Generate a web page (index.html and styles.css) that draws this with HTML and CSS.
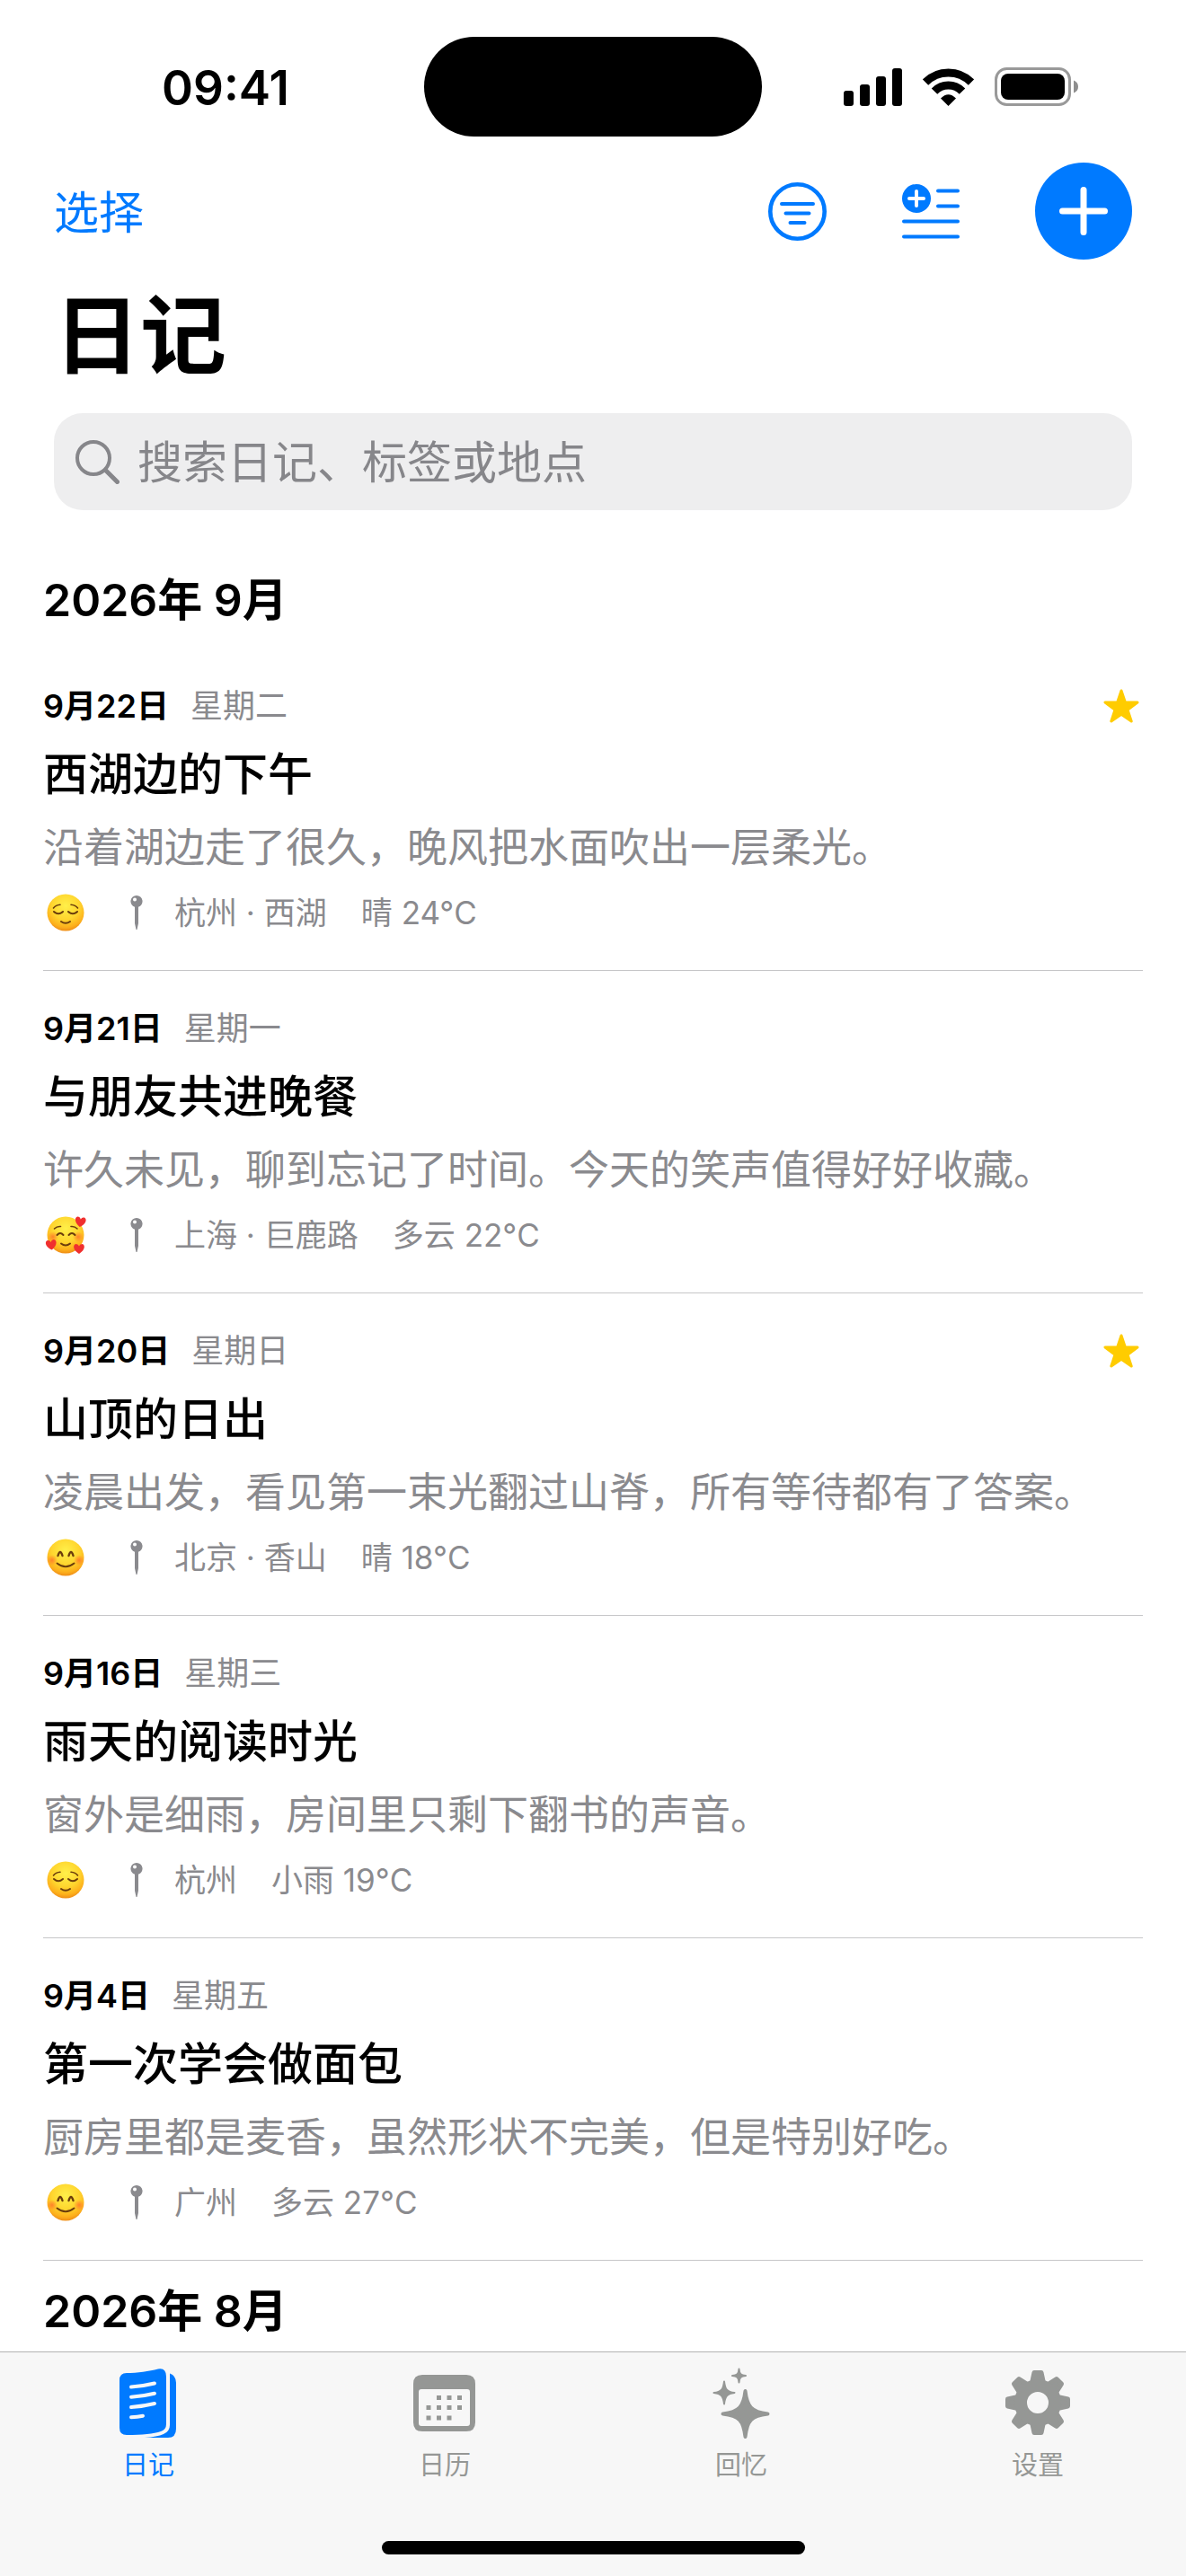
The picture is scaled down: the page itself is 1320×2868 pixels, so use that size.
FILE: index.html
```
<!DOCTYPE html>
<html lang="zh-CN">

<head>
    <meta charset="UTF-8">
    <meta name="viewport" content="width=device-width, initial-scale=1.0">
    <title>日记</title>
    <link rel="stylesheet" href="styles.css">
</head>

<body>
    <!-- Shared icons -->
    <svg class="sprite" aria-hidden="true">
        <defs>
            <radialGradient id="face" cx="50%" cy="32%" r="68%">
                <stop offset="0" stop-color="#fff04a" />
                <stop offset="0.55" stop-color="#ffd52e" />
                <stop offset="0.85" stop-color="#fdb01c" />
                <stop offset="1" stop-color="#ee8d17" />
            </radialGradient>
            <radialGradient id="blush">
                <stop offset="0" stop-color="#ff6a2a" stop-opacity="0.75" />
                <stop offset="1" stop-color="#ff6a2a" stop-opacity="0" />
            </radialGradient>
        </defs>
        <symbol id="relieved" viewBox="0 0 46 46">
            <circle cx="23" cy="23" r="20.500" fill="url(#face)" />
            <g fill="none" stroke="#6b3d0c" stroke-width="1.6" stroke-linecap="round">
                <path d="M9.500 18q2.500-3.500 7.500-3.800M36.500 18q-2.500-3.500-7.500-3.800" />
                <path d="M10 22q5 4.500 10 0M26 22q5 4.500 10 0M18 33q5 3.500 10 0" stroke-width="2" />
            </g>
        </symbol>
        <symbol id="smile" viewBox="0 0 46 46">
            <circle cx="23" cy="23" r="20.500" fill="url(#face)" />
            <circle cx="8" cy="26" r="6" fill="url(#blush)" />
            <circle cx="38" cy="26" r="6" fill="url(#blush)" />
            <g fill="none" stroke="#6b3d0c" stroke-width="2.4" stroke-linecap="round">
                <path d="M14.500 21q2.500-8 5 0M26.500 21q2.500-8 5 0" />
                <path d="M13.500 29.500q9.500 7.500 19 0" stroke-width="2" />
            </g>
        </symbol>
        <symbol id="loved" viewBox="0 0 46 46">
            <circle cx="23" cy="23" r="20.500" fill="url(#face)" />
            <circle cx="37" cy="25" r="6" fill="url(#blush)" />
            <circle cx="9" cy="25" r="6" fill="url(#blush)" />
            <g fill="none" stroke="#6b3d0c" stroke-width="2" stroke-linecap="round">
                <path d="M10.500 16q3-3 7-2.500M29 13.500q4-.5 7 2.500" stroke-width="1.600" />
                <path d="M13.500 23q3.500-4 7 0M26.500 23q3.500-4 7 0M18 32.500q5 4 10 0" />
            </g>
            <g fill="#f0302f">
                <path d="M0 6C-8 1-6.500-5-3.200-5Q-.8-5 0-2.500 .8-5 3.200-5C6.500-5 8 1 0 6Z" transform="translate(39.500 8) rotate(8)" />
                <path d="M0 6C-8 1-6.500-5-3.200-5Q-.8-5 0-2.500 .8-5 3.200-5C6.500-5 8 1 0 6Z" transform="translate(7 33.500) rotate(-8)" />
                <path d="M0 6C-8 1-6.500-5-3.200-5Q-.8-5 0-2.500 .8-5 3.200-5C6.500-5 8 1 0 6Z" transform="translate(38 38)" />
            </g>
        </symbol>
        <symbol id="pin" viewBox="0 0 14 38">
            <path fill-rule="evenodd" d="M7 0a6.500 6.500 0 0 1 2 12.700V31L7.500 38h-1L5 31V12.700A6.500 6.500 0 0 1 7 0ZM5 2.500a2 2 0 1 0 0 4 2 2 0 0 0 0-4Z" />
        </symbol>
        <symbol id="star" viewBox="0 0 40 38">
            <path d="M20 2l4.300 12.800 13.700.2-11 8.200 4.200 12.800L20 28.200 8.800 36 13 23.200 2 15l13.700-.2Z" stroke-width="3" stroke-linejoin="round" />
        </symbol>
    </svg>

    <!-- Status bar -->
    <div class="status-bar">
        <span class="time">09:41</span>
        <span class="island"></span>
        <div class="status-icons">
            <svg width="65" height="42" viewBox="0 0 65 42">
                <rect x="0" y="25" width="11" height="17" rx="3" />
                <rect x="18" y="18" width="11" height="24" rx="3" />
                <rect x="36" y="9" width="11" height="33" rx="3" />
                <rect x="54" y="0" width="11" height="42" rx="3" />
            </svg>
            <svg width="57" height="42" viewBox="0 0 57 42">
                <g fill="none" stroke="#000" stroke-width="9">
                    <path d="M3 15.500a36 36 0 0 1 51 0" />
                    <path d="M13 25.600a21.500 21.500 0 0 1 31 0" />
                </g>
                <path d="M28.500 42l-8.500-8.600q8.500-8.500 17 0Z" />
            </svg>
            <svg width="93" height="43" viewBox="0 0 93 43">
                <rect x="1.500" y="1.500" width="82" height="40" rx="12" fill="none" stroke="#999" stroke-width="3" />
                <rect x="7" y="7" width="71" height="29" rx="8" />
                <path d="M88 14.500q5 2 5 7t-5 7Z" fill="#8e8e8e" />
            </svg>
        </div>
    </div>

    <!-- Toolbar, title and search -->
    <header class="header">
        <div class="toolbar">
            <button class="text-btn" type="button">选择</button>
            <div class="actions">
                <button class="icon-btn" type="button" aria-label="筛选">
                    <svg width="65" height="65" viewBox="0 0 65 65" fill="none" stroke="currentColor" stroke-width="4" stroke-linecap="round">
                        <circle cx="32.500" cy="32.500" r="30.200" stroke-width="4.600" />
                        <path d="M15 24h35M19.500 34.500h26M24.500 45h16" />
                    </svg>
                </button>
                <button class="icon-btn" type="button" aria-label="从模板新建">
                    <svg width="64" height="61" viewBox="0 0 64 61" fill="none" stroke="currentColor" stroke-width="4" stroke-linecap="round">
                        <circle cx="16" cy="16" r="16" fill="currentColor" stroke="none" />
                        <path d="M40 7.500h22M40 24.500h22M2 41.500h60M2 58.500h60" />
                        <path d="M16 8v16M8 16h16" stroke="#fff" />
                    </svg>
                </button>
                <button class="add-btn" type="button" aria-label="新建日记">
                    <svg width="54" height="54" viewBox="0 0 54 54" stroke="currentColor" stroke-width="7" stroke-linecap="round">
                        <path d="M27 3.500v47M3.500 27h47" />
                    </svg>
                </button>
            </div>
        </div>
        <h1 class="page-title">日记</h1>
        <label class="search">
            <svg width="49" height="49" viewBox="0 0 49 49" fill="none" stroke="currentColor" stroke-linecap="round">
                <circle cx="20" cy="20" r="18" stroke-width="4" />
                <path d="M33.500 33.500L46.500 46.500" stroke-width="5" />
            </svg>
            <input class="search-input" type="search" placeholder="搜索日记、标签或地点" aria-label="搜索">
        </label>
    </header>

    <!-- Entries -->
    <main class="journal">
        <section>
            <h2 class="month">2026年 9月</h2>
            <article class="entry">
                <div class="entry-date">
                    <time datetime="2026-09-22">9月22日</time>
                    <span class="weekday">星期二</span>
                    <svg class="star" role="img" aria-label="已收藏"><use href="#star" /></svg>
                </div>
                <h3 class="entry-title">西湖边的下午</h3>
                <p class="excerpt">沿着湖边走了很久，晚风把水面吹出一层柔光。</p>
                <div class="meta">
                    <svg class="mood" role="img" aria-label="平静"><use href="#relieved" /></svg>
                    <svg class="pin" aria-hidden="true"><use href="#pin" /></svg>
                    <span class="place">杭州 · 西湖</span>
                    <span>晴 24°C</span>
                </div>
            </article>
            <article class="entry">
                <div class="entry-date">
                    <time datetime="2026-09-21">9月21日</time>
                    <span class="weekday">星期一</span>
                </div>
                <h3 class="entry-title">与朋友共进晚餐</h3>
                <p class="excerpt">许久未见，聊到忘记了时间。今天的笑声值得好好收藏。</p>
                <div class="meta">
                    <svg class="mood" role="img" aria-label="喜爱"><use href="#loved" /></svg>
                    <svg class="pin" aria-hidden="true"><use href="#pin" /></svg>
                    <span class="place">上海 · 巨鹿路</span>
                    <span>多云 22°C</span>
                </div>
            </article>
            <article class="entry">
                <div class="entry-date">
                    <time datetime="2026-09-20">9月20日</time>
                    <span class="weekday">星期日</span>
                    <svg class="star" role="img" aria-label="已收藏"><use href="#star" /></svg>
                </div>
                <h3 class="entry-title">山顶的日出</h3>
                <p class="excerpt">凌晨出发，看见第一束光翻过山脊，所有等待都有了答案。</p>
                <div class="meta">
                    <svg class="mood" role="img" aria-label="开心"><use href="#smile" /></svg>
                    <svg class="pin" aria-hidden="true"><use href="#pin" /></svg>
                    <span class="place">北京 · 香山</span>
                    <span>晴 18°C</span>
                </div>
            </article>
            <article class="entry">
                <div class="entry-date">
                    <time datetime="2026-09-16">9月16日</time>
                    <span class="weekday">星期三</span>
                </div>
                <h3 class="entry-title">雨天的阅读时光</h3>
                <p class="excerpt">窗外是细雨，房间里只剩下翻书的声音。</p>
                <div class="meta">
                    <svg class="mood" role="img" aria-label="平静"><use href="#relieved" /></svg>
                    <svg class="pin" aria-hidden="true"><use href="#pin" /></svg>
                    <span class="place">杭州</span>
                    <span>小雨 19°C</span>
                </div>
            </article>
            <article class="entry">
                <div class="entry-date">
                    <time datetime="2026-09-04">9月4日</time>
                    <span class="weekday">星期五</span>
                </div>
                <h3 class="entry-title">第一次学会做面包</h3>
                <p class="excerpt">厨房里都是麦香，虽然形状不完美，但是特别好吃。</p>
                <div class="meta">
                    <svg class="mood" role="img" aria-label="开心"><use href="#smile" /></svg>
                    <svg class="pin" aria-hidden="true"><use href="#pin" /></svg>
                    <span class="place">广州</span>
                    <span>多云 27°C</span>
                </div>
            </article>
        </section>
        <section>
            <h2 class="month">2026年 8月</h2>
        </section>
    </main>

    <!-- Tab bar -->
    <footer class="tab-bar">
        <nav class="tabs">
            <a class="tab active" href="#" aria-current="page">
                <svg width="64" height="78" viewBox="0 0 64 78">
                    <path d="M8 5C20 5 33 3 43 .5Q52-1 52 9V62Q52 68 46 70 34 74 8 74 0 74 0 66V13Q0 5 8 5Z" />
                    <path d="M56 5.500Q63 8 63 16V67Q63 77 54 77H28Q42 76 49 73 56 70 56 63Z" />
                    <path d="M13 20.500q14-1 26-4M13 31.700q14-1 26-4M13 43q14-1 26-4M13 54.200q7-.3 13-1.500" fill="none" stroke="#f7f7f7" stroke-width="4" stroke-linecap="round" />
                </svg>
                <span>日记</span>
            </a>
            <a class="tab" href="#">
                <svg width="70" height="78" viewBox="0 -7 70 78">
                    <path fill-rule="evenodd" d="M10 0H59Q69 0 69 10V53Q69 63 59 63H10Q0 63 0 53V10Q0 0 10 0ZM9 16Q6 16 6 19V54Q6 57 9 57H60Q63 57 63 54V19Q63 16 60 16Z" />
                    <path d="M26 23h5v5h-5zM37.500 23h5v5h-5zM49 23h5v5h-5zM14.500 34h5v5h-5zM26 34h5v5h-5zM37.500 34h5v5h-5zM49 34h5v5h-5zM14.500 45.500h5v5h-5zM26 45.500h5v5h-5zM37.500 45.500h5v5h-5z" />
                </svg>
                <span>日历</span>
            </a>
            <a class="tab" href="#">
                <svg width="64" height="78" viewBox="0 1 64 78" overflow="visible" stroke="currentColor" stroke-linejoin="round">
                    <path d="M36.500 26C38.500 43 43 49.500 61.500 51.500 43 53.500 38.500 59 36.500 77 34.500 59 30 53.500 11.500 51.500 30 49.500 34.500 43 36.500 26Z" stroke-width="4" />
                    <path d="M13 15.500C14 24 16 27 24.500 28 16 29 14 32 13 40.500 12 32 10 29 1.500 28 10 27 12 24 13 15.500Z" stroke-width="2" />
                    <path d="M29.500 1.500C30 7 31.500 8.500 37 9 31.500 9.500 30 11 29.500 16.500 29 11 27.500 9.500 22 9 27.500 8.500 29 7 29.500 1.500Z" stroke-width="2" />
                </svg>
                <span>回忆</span>
            </a>
            <a class="tab" href="#">
                <svg width="72" height="78" viewBox="-36 -38 72 78">
                    <g stroke="currentColor" stroke-width="5" stroke-linejoin="round">
                        <path id="teeth" d="M-4-33.500H4L6.500-22H-6.500ZM-4 33.500H4L6.500 22H-6.500ZM-33.500-4V4L-22 6.500V-6.500ZM33.500-4V4L22 6.500V-6.500Z" />
                        <use href="#teeth" transform="rotate(45)" />
                    </g>
                    <circle r="19" fill="none" stroke="currentColor" stroke-width="14" />
                </svg>
                <span>设置</span>
            </a>
        </nav>
        <div class="home-indicator"></div>
    </footer>
</body>

</html>
```
FILE: styles.css
```
* {
    box-sizing: border-box;
}

body {
    display: flex;
    flex-direction: column;
    height: 100vh;
    margin: 0;
    background-color: #fff;
    color: #000;
    font-family: Inter, "Noto Sans CJK SC", sans-serif;
}

h1,
h2,
h3,
p {
    margin: 0;
}

button {
    padding: 0;
    border: none;
    background: none;
    font-family: inherit;
    cursor: pointer;
}

svg {
    display: block;
    flex-shrink: 0;
    fill: currentColor;
}

svg[fill="none"] {
    fill: none;
}

.sprite {
    position: absolute;
    width: 0;
    height: 0;
}

/* Status Bar */
.status-bar {
    display: grid;
    grid-template-columns: 1fr 376px 1fr;
    align-items: center;
    justify-items: center;
    padding: 41px 30px 29px;
}

.time {
    padding-top: 3px;
    font-size: 53px;
    font-weight: 600;
}

.island {
    width: 100%;
    height: 111px;
    border-radius: 56px;
    background-color: #000;
}

.status-icons {
    display: flex;
    align-items: center;
    gap: 23px;
}

/* Header */
.header {
    padding: 0 60px;
}

.toolbar,
.actions {
    display: flex;
    align-items: center;
}

.toolbar {
    justify-content: space-between;
}

.actions {
    gap: 84px;
    color: #007aff;
}

.text-btn {
    padding-top: 4px;
    color: #007aff;
    font-size: 50px;
    line-height: 64px;
}

.icon-btn {
    color: inherit;
}

.add-btn {
    display: flex;
    align-items: center;
    justify-content: center;
    width: 108px;
    height: 108px;
    border-radius: 50%;
    background-color: #007aff;
    color: #fff;
}

.page-title {
    margin: 24px 0 27px;
    font-size: 96px;
    font-weight: 700;
    line-height: 120px;
}

/* Search */
.search {
    display: flex;
    align-items: center;
    gap: 20px;
    height: 108px;
    padding: 0 24px;
    border-radius: 32px;
    background-color: #eeeeef;
    color: #86868a;
}

.search-input {
    flex: 1;
    min-width: 0;
    padding: 2px 0 0;
    border: none;
    outline: none;
    background: none;
    font-family: inherit;
    font-size: 50px;
    line-height: 64px;
}

.search-input::placeholder {
    color: #86868a;
}

/* Journal List */
.journal {
    flex: 1;
    min-height: 0;
    overflow: hidden;
    padding: 44px 48px 0;
}

.month {
    padding: 24px 0 22px;
    font-size: 50px;
    font-weight: 600;
    line-height: 64px;
}

.entry {
    display: flex;
    flex-direction: column;
    gap: 20px;
    padding: 40px 0 42px;
    border-bottom: 1px solid #c6c6c8;
}

.entry-date {
    display: flex;
    align-items: center;
    gap: 24px;
    font-size: 36px;
    font-weight: 600;
    line-height: 48px;
}

.weekday {
    color: #8a8a8e;
    font-weight: 400;
}

.star {
    width: 40px;
    height: 38px;
    margin-left: auto;
    margin-right: 4px;
    color: #ffcc00;
    stroke: currentColor;
}

.entry-title {
    font-size: 50px;
    font-weight: 500;
    line-height: 64px;
}

.excerpt {
    color: #8a8a8e;
    font-size: 45px;
    line-height: 60px;
}

.meta {
    display: flex;
    align-items: center;
    color: #8a8a8e;
    font-size: 35px;
    line-height: 44px;
}

.mood {
    width: 46px;
    height: 46px;
    margin: -1px 0 -1px 2px;
}

.pin {
    width: 14px;
    height: 38px;
    margin: 0 35px 0 49px;
}

.place {
    margin-right: 38px;
}

/* Tab Bar */
.tab-bar {
    height: 250px;
    border-top: 1px solid #b2b2b2;
    background-color: #f7f7f7;
}

.tabs {
    display: flex;
    padding-top: 18px;
}

.tab {
    display: flex;
    flex: 1;
    flex-direction: column;
    align-items: center;
    gap: 10px;
    color: #959795;
    font-size: 29px;
    line-height: 40px;
    text-decoration: none;
}

.tab.active {
    color: #007aff;
}

.home-indicator {
    width: 471px;
    height: 15px;
    margin: 64px auto 0;
    border-radius: 8px;
    background-color: #000;
}
```
